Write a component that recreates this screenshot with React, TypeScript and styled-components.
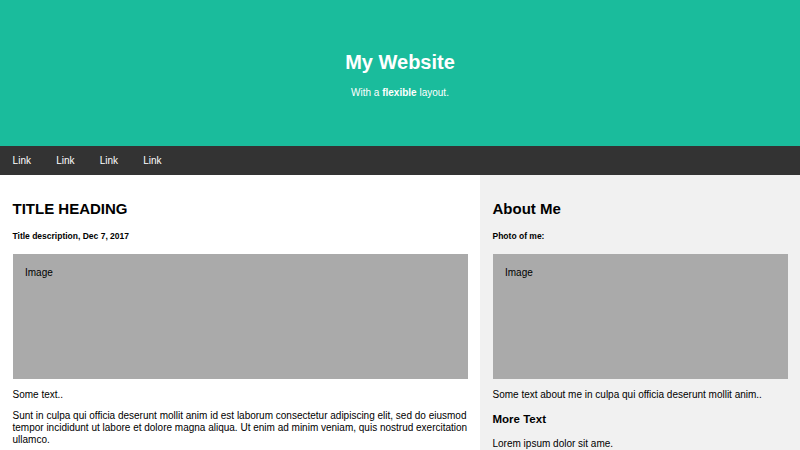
import * as React from "react";
import styled, { createGlobalStyle } from "styled-components";

const GlobalStyle = createGlobalStyle`
  html, body {
    margin: 0;
    padding: 0;
    background: #ffffff;
  }
  body {
    font-family: "Liberation Sans", Arial, sans-serif;
    color: #000000;
  }
  * {
    box-sizing: border-box;
  }
`;

const links = ["Link", "Link", "Link", "Link"];

export default function App() {
  return (
    <>
      <GlobalStyle />
      <Header>
        <SiteTitle>My Website</SiteTitle>
        <Tagline>
          With a <b>flexible</b> layout.
        </Tagline>
      </Header>

      <Navbar>
        {links.map((l, i) => (
          <NavLink key={i} href="#">
            {l}
          </NavLink>
        ))}
      </Navbar>

      <Row>
        <Main>
          <Heading>TITLE HEADING</Heading>
          <SubHeading>Title description, Dec 7, 2017</SubHeading>
          <FakeImg>Image</FakeImg>
          <Text>Some text..</Text>
          <Text>
            Sunt in culpa qui officia deserunt mollit anim id est laborum
            consectetur adipiscing elit, sed do eiusmod tempor incididunt ut
            labore et dolore magna aliqua. Ut enim ad minim veniam, quis
            nostrud exercitation ullamco.
          </Text>
        </Main>
        <Side>
          <Heading>About Me</Heading>
          <SubHeading>Photo of me:</SubHeading>
          <FakeImg>Image</FakeImg>
          <Text>Some text about me in culpa qui officia deserunt mollit anim..</Text>
          <SmallHeading>More Text</SmallHeading>
          <Text $gap={11.5}>Lorem ipsum dolor sit ame.</Text>
        </Side>
      </Row>
    </>
  );
}

const Header = styled.div`
  background: #1abc9c;
  color: #ffffff;
  text-align: center;
  height: 146px;
  padding-top: 50px;
`;

const SiteTitle = styled.h1`
  margin: 0;
  font-size: 20px;
  line-height: 24px;
  font-weight: bold;
`;

const Tagline = styled.p`
  margin: 12px 0 0;
  font-size: 10px;
  line-height: 13px;
`;

const Navbar = styled.nav`
  display: flex;
  height: 29px;
  background: #333333;
`;

const NavLink = styled.a`
  display: block;
  color: #ffffff;
  text-decoration: none;
  font-size: 10px;
  line-height: 29px;
  padding: 0 12.6px;
`;

const Row = styled.div`
  display: flex;
`;

const Main = styled.div`
  flex: 0 0 480px;
  background: #ffffff;
  padding: 12px 12.5px;
`;

const Side = styled.div`
  flex: 1;
  background: #f1f1f1;
  padding: 12px 12.5px;
`;

const Heading = styled.h2`
  margin: 12.5px 0 0;
  font-size: 15px;
  line-height: 17px;
  font-weight: bold;
`;

const SubHeading = styled.h5`
  margin: 14px 0 0;
  font-size: 8.5px;
  line-height: 10px;
  font-weight: bold;
`;

const SmallHeading = styled.h3`
  margin: 11px 0 0;
  font-size: 11.5px;
  line-height: 15px;
  font-weight: bold;
`;

const FakeImg = styled.div`
  margin-top: 13px;
  height: 125px;
  background: #aaaaaa;
  padding: 13.5px 12.5px;
  font-size: 10px;
  line-height: 11px;
`;

const Text = styled.p<{ $gap?: number }>`
  margin: ${p => p.$gap ?? 10}px 0 0;
  font-size: 10px;
  line-height: 12px;

  & + & {
    margin-top: 9.5px;
  }
`;
